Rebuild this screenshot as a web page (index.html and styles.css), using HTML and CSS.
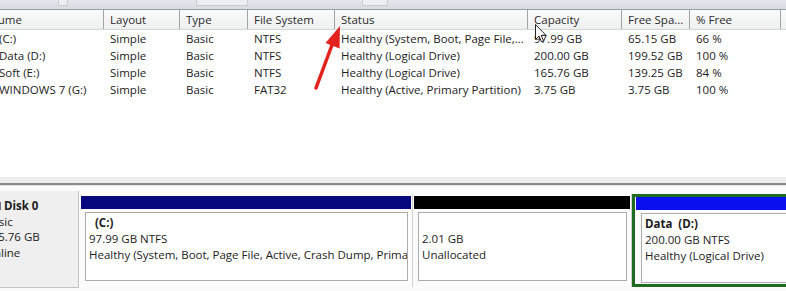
FILE: index.html
```html
<!DOCTYPE html>
<html lang="en">
<head>
    <meta charset="UTF-8">
    <title>Disk Management</title>
    <link rel="stylesheet" href="styles.css">
</head>
<body>

    <!-- toolbar strip (mostly cut off) -->
    <div class="toolbar">
        <span class="tb-btn tb-1"></span>
        <span class="tb-btn tb-2"></span>
        <span class="tb-btn tb-3"></span>
    </div>

    <!-- volume list -->
    <div class="volumes">
        <div class="vol-row vol-head">
            <div class="cell">Volume</div>
            <div class="cell">Layout</div>
            <div class="cell">Type</div>
            <div class="cell">File System</div>
            <div class="cell">Status</div>
            <div class="cell">Capacity</div>
            <div class="cell">Free Spa...</div>
            <div class="cell">% Free</div>
            <div class="cell last"></div>
        </div>
        <div class="vol-row">
            <div class="cell"><span class="drive-ico"></span>(C:)</div>
            <div class="cell">Simple</div>
            <div class="cell">Basic</div>
            <div class="cell">NTFS</div>
            <div class="cell">Healthy (System, Boot, Page File,...</div>
            <div class="cell">97.99 GB</div>
            <div class="cell">65.15 GB</div>
            <div class="cell">66 %</div>
            <div class="cell"></div>
        </div>
        <div class="vol-row">
            <div class="cell"><span class="drive-ico"></span>Data (D:)</div>
            <div class="cell">Simple</div>
            <div class="cell">Basic</div>
            <div class="cell">NTFS</div>
            <div class="cell">Healthy (Logical Drive)</div>
            <div class="cell">200.00 GB</div>
            <div class="cell">199.52 GB</div>
            <div class="cell">100 %</div>
            <div class="cell"></div>
        </div>
        <div class="vol-row">
            <div class="cell"><span class="drive-ico"></span>Soft (E:)</div>
            <div class="cell">Simple</div>
            <div class="cell">Basic</div>
            <div class="cell">NTFS</div>
            <div class="cell">Healthy (Logical Drive)</div>
            <div class="cell">165.76 GB</div>
            <div class="cell">139.25 GB</div>
            <div class="cell">84 %</div>
            <div class="cell"></div>
        </div>
        <div class="vol-row">
            <div class="cell"><span class="drive-ico"></span>WINDOWS 7 (G:)</div>
            <div class="cell">Simple</div>
            <div class="cell">Basic</div>
            <div class="cell">FAT32</div>
            <div class="cell">Healthy (Active, Primary Partition)</div>
            <div class="cell">3.75 GB</div>
            <div class="cell">3.75 GB</div>
            <div class="cell">100 %</div>
            <div class="cell"></div>
        </div>
    </div>

    <div class="splitter"></div>

    <!-- graphical disk view -->
    <div class="disk-pane">
        <div class="disk">
            <div class="disk-info">
                <div class="disk-name"><span class="disk-ico"></span>Disk 0</div>
                <div>Basic</div>
                <div>465.76 GB</div>
                <div>Online</div>
            </div>
            <div class="parts">
                <div class="part part-c">
                    <div class="bar bar-primary"></div>
                    <div class="part-body">
                        <div class="part-name">  (C:)</div>
                        <div>97.99 GB NTFS</div>
                        <div>Healthy (System, Boot, Page File, Active, Crash Dump, Primary Partition)</div>
                    </div>
                </div>
                <div class="part part-free">
                    <div class="bar bar-unalloc"></div>
                    <div class="part-body">
                        <div class="part-name"></div>
                        <div>2.01 GB</div>
                        <div>Unallocated</div>
                    </div>
                </div>
                <div class="part part-d">
                    <div class="bar bar-logical"></div>
                    <div class="part-body">
                        <div class="part-name">Data  (D:)</div>
                        <div>200.00 GB NTFS</div>
                        <div>Healthy (Logical Drive)</div>
                    </div>
                </div>
            </div>
        </div>
    </div>

    <!-- red arrow pointing at the Status column -->
    <svg class="arrow" width="786" height="291" viewBox="0 0 786 291">
        <line x1="316" y1="88" x2="332" y2="45" stroke="#e3221d" stroke-width="3.5" stroke-linecap="round"/>
        <polygon points="340,26 325.5,43 339.5,48.5" fill="#e3221d"/>
    </svg>

    <!-- mouse pointer -->
    <svg class="cursor" width="12" height="19" viewBox="0 0 12 19">
        <path d="M0.5 0.5 L0.5 15.5 L4 12 L6.5 17.8 L8.6 16.9 L6.2 11.3 L11 11.3 Z" fill="#fff" stroke="#222" stroke-width="1"/>
    </svg>

</body>
</html>
```

FILE: styles.css
```css
body {
    margin: 0;
    width: 786px;
    height: 291px;
    overflow: hidden;
    position: relative;
    background: #fcfcfc;
    font-family: "Segoe UI", "Open Sans", sans-serif;
    font-size: 11.5px;
    color: #1c1c1c;
}

/* toolbar strip */
.toolbar {
    height: 9px;
    background: linear-gradient(#e4e7ec, #d8dce3);
    border-bottom: 1px solid #9a9da3;
    display: flex;
    align-items: flex-start;
}

.tb-btn {
    height: 5px;
    background: #eceef2;
    border: 1px solid #c9ccd2;
    border-top: none;
}
.tb-1 { margin-left: 58px; width: 8px; }
.tb-2 { margin-left: 128px; width: 50px; }
.tb-3 { margin-left: 114px; width: 24px; }

/* volume list */
.volumes {
    height: 167px;
    background: #fff;
    margin-left: -25px;
    white-space: nowrap;
}

.vol-row {
    display: grid;
    grid-template-columns: 129px 76px 68px 87px 193px 94px 68px 91px 1fr;
    height: 17px;
    line-height: 17px;
}

.vol-row .cell {
    padding-left: 6px;
    overflow: hidden;
}

.vol-head {
    height: 19px;
    line-height: 19px;
    background: linear-gradient(#fbfbfb, #eeeff1);
    border-bottom: 1px solid #d5d5d5;
    color: #2b2b2b;
}

.vol-head .cell {
    border-right: 1px solid #a3a3a3;
}

.vol-head .cell.last {
    border-right: none;
}

.drive-ico {
    display: inline-block;
    width: 14px;
    height: 10px;
    margin-right: 4px;
    background: #b8bcc4;
    vertical-align: -1px;
}

/* splitter between panes */
.splitter {
    height: 6px;
    background: #ededed;
    border-bottom: 2px solid #8b8b8b;
}

/* disk view */
.disk-pane {
    height: 106px;
    background: #fbfbfb;
    border-top: 1px solid #e4e4e4;
}

.disk {
    display: flex;
    align-items: flex-start;
    margin-top: 5px;
}

.disk-info {
    flex-shrink: 0;
    margin-left: -20px;
    width: 99px;
    height: 97px;
    padding: 7px 0 0 5px;
    box-sizing: border-box;
    background: #efefef;
    border-right: 1px solid #c4c4c4;
    border-bottom: 1px solid #c4c4c4;
    line-height: 15.5px;
}

.disk-name {
    font-weight: bold;
}

.disk-ico {
    display: inline-block;
    width: 16px;
    height: 8px;
    margin-right: 3px;
    background: #6f747c;
    vertical-align: 0;
}

.parts {
    display: flex;
    flex-shrink: 0;
    margin-left: 1px;
    margin-top: 3px;
}

.part {
    flex-shrink: 0;
    height: 93px;
    padding: 2px 1px 0;
    box-sizing: border-box;
    border-right: 1px solid #d2d2d2;
    display: flex;
    flex-direction: column;
}

.part-c { width: 333px; }
.part-free { width: 219px; }
.part-d {
    width: 170px;
    padding: 0 1px;
    border: 3px solid #1f6b22;
}

.bar {
    height: 13px;
    flex-shrink: 0;
}
.bar-primary { background: #08087e; }
.bar-unalloc { background: #000; }
.bar-logical { background: #0a0ff0; }

.part-body {
    margin: 3px 3px 0 4px;
    height: 69px;
    padding: 2px 3px;
    box-sizing: border-box;
    background: #fff;
    border: 1px solid #acacac;
    line-height: 16px;
    white-space: nowrap;
    overflow: hidden;
}

.part-d .part-body {
    margin-left: 5px;
    height: 70px;
}

.part-name {
    font-weight: bold;
    white-space: pre;
    height: 16px;
}

/* overlays */
.arrow {
    position: absolute;
    left: 0;
    top: 0;
    pointer-events: none;
}

.cursor {
    position: absolute;
    left: 535px;
    top: 24px;
    pointer-events: none;
}
```
